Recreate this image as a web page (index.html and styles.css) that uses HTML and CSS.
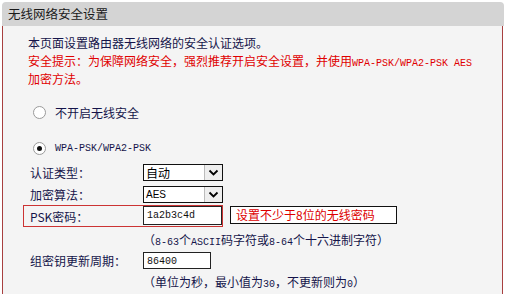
FILE: index.html
```html
<!DOCTYPE html>
<html lang="zh-CN">
<head>
<meta charset="utf-8">
<title>无线网络安全设置</title>
<link rel="stylesheet" href="styles.css">
</head>
<body>
<div class="page">
  <div class="head">无线网络安全设置</div>
  <div class="panel">
    <p class="intro">本页面设置路由器无线网络的安全认证选项。</p>
    <p class="warn">安全提示：为保障网络安全，强烈推荐开启安全设置，并使用<span class="en">WPA-PSK/WPA2-PSK AES</span></p>
    <p class="warn">加密方法。</p>

    <div class="radio-row r1"><span class="radio"></span><span>不开启无线安全</span></div>
    <div class="radio-row r2"><span class="radio on"></span><span class="en">WPA-PSK/WPA2-PSK</span></div>

    <div class="row auth">
      <span class="label">认证类型：</span>
      <div class="select"><span class="val">自动</span><span class="btn"><svg width="11" height="7" viewBox="0 0 11 7"><path d="M1.5 1.5 L5.5 5.5 L9.5 1.5" fill="none" stroke="#000" stroke-width="1.8"/></svg></span></div>
    </div>
    <div class="row enc">
      <span class="label">加密算法：</span>
      <div class="select"><span class="val en">AES</span><span class="btn"><svg width="11" height="7" viewBox="0 0 11 7"><path d="M1.5 1.5 L5.5 5.5 L9.5 1.5" fill="none" stroke="#000" stroke-width="1.8"/></svg></span></div>
    </div>
    <div class="row psk">
      <div class="psk-box">
        <span class="label">PSK密码：</span>
        <div class="input psk-input en">1a2b3c4d</div>
      </div>
      <div class="tip">设置不少于8位的无线密码</div>
    </div>
    <div class="hint h1">（<span class="en">8-63</span>个<span class="en">ASCII</span>码字符或<span class="en">8-64</span>个十六进制字符）</div>
    <div class="row grp">
      <span class="label">组密钥更新周期：</span>
      <div class="input grp-input en">86400</div>
    </div>
    <div class="hint h2">（单位为秒，最小值为<span class="en">30</span>，不更新则为<span class="en">0</span>）</div>
  </div>
</div>
</body>
</html>
```

FILE: styles.css
```css
html, body {
  margin: 0;
  padding: 0;
  background: #ffffff;
  height: 100%;
  overflow: hidden;
}
body {
  font-family: "Noto Sans CJK SC", "Liberation Sans", sans-serif;
  font-size: 12px;
  color: #14144a;
}
.page {
  padding: 2px 3px 0 2px;
  height: 100%;
  box-sizing: border-box;
  display: flex;
  flex-direction: column;
}
.head {
  height: 24px;
  line-height: 24px;
  background: #d4d4d4;
  border-radius: 4px 4px 0 0;
  padding-left: 6px;
  color: #1a1a1a;
  font-size: 12.5px;
}
.panel {
  flex: 1;
  background: #f4f4f4;
  border-left: 1px solid #a84040;
  border-right: 1px solid #a84040;
  margin-right: 1px;
  padding: 8px 0 0 25px;
}
p {
  margin: 0;
  line-height: 18px;
  height: 18px;
  white-space: nowrap;
}
.warn {
  color: #e00000;
}
.en {
  font-family: "Liberation Mono", monospace;
  font-size: 10px;
}
.radio-row {
  display: flex;
  align-items: center;
  height: 18px;
  gap: 9px;
  padding-left: 5px;
}
.r1 { margin-top: 15px; }
.r2 { margin-top: 18px; }
.radio {
  width: 11px;
  height: 11px;
  border: 1px solid #9a9a9a;
  border-radius: 50%;
  background: #ffffff;
  display: flex;
  align-items: center;
  justify-content: center;
}
.radio.on::after {
  content: "";
  width: 5px;
  height: 5px;
  border-radius: 50%;
  background: #111;
}
.row {
  display: flex;
  align-items: center;
  padding-left: 2px;
}
.label {
  width: 113px;
  flex: none;
}
.auth { margin-top: 6px; height: 18px; }
.enc { margin-top: 4px; height: 18px; }
.psk { margin-top: 2px; height: 22px; padding-left: 0; margin-left: -5px; }
.grp { margin-top: 2px; height: 18px; }
.select {
  width: 78px;
  height: 15px;
  border: 1px solid #111;
  background: #fff;
  display: flex;
  align-items: stretch;
}
.select .val {
  flex: 1;
  padding-left: 2px;
  line-height: 15px;
  color: #000;
}
.select .val.en { font-family: "Liberation Sans", sans-serif; font-size: 10px; }
.select .btn {
  width: 17px;
  border-left: 1px solid #bbb;
  background: #eeeeee;
  display: flex;
  align-items: center;
  justify-content: center;
}
.psk-box {
  display: flex;
  align-items: center;
  box-sizing: border-box;
  height: 22px;
  width: 200px;
  border: 1px solid #cc3333;
  padding-left: 6px;
}
.input {
  height: 17px;
  line-height: 17px;
  background: #fff;
  border: 1px solid #222;
  box-sizing: border-box;
  padding-left: 3px;
  color: #111;
}
.psk-input { width: 80px; height: 19px; line-height: 17px; margin-top: -1px; }
.grp-input { width: 68px; height: 17px; }
.tip {
  margin-left: 7px;
  margin-top: -3px;
  box-sizing: border-box;
  height: 18px;
  line-height: 16px;
  width: 167px;
  border: 1px solid #111;
  background: #fff;
  color: #dd0000;
  padding-left: 5px;
}
.hint {
  height: 18px;
  line-height: 18px;
  padding-left: 115px;
  white-space: nowrap;
}
.h1 { margin-top: 4px; }
.h2 { margin-top: 4px; }
```
